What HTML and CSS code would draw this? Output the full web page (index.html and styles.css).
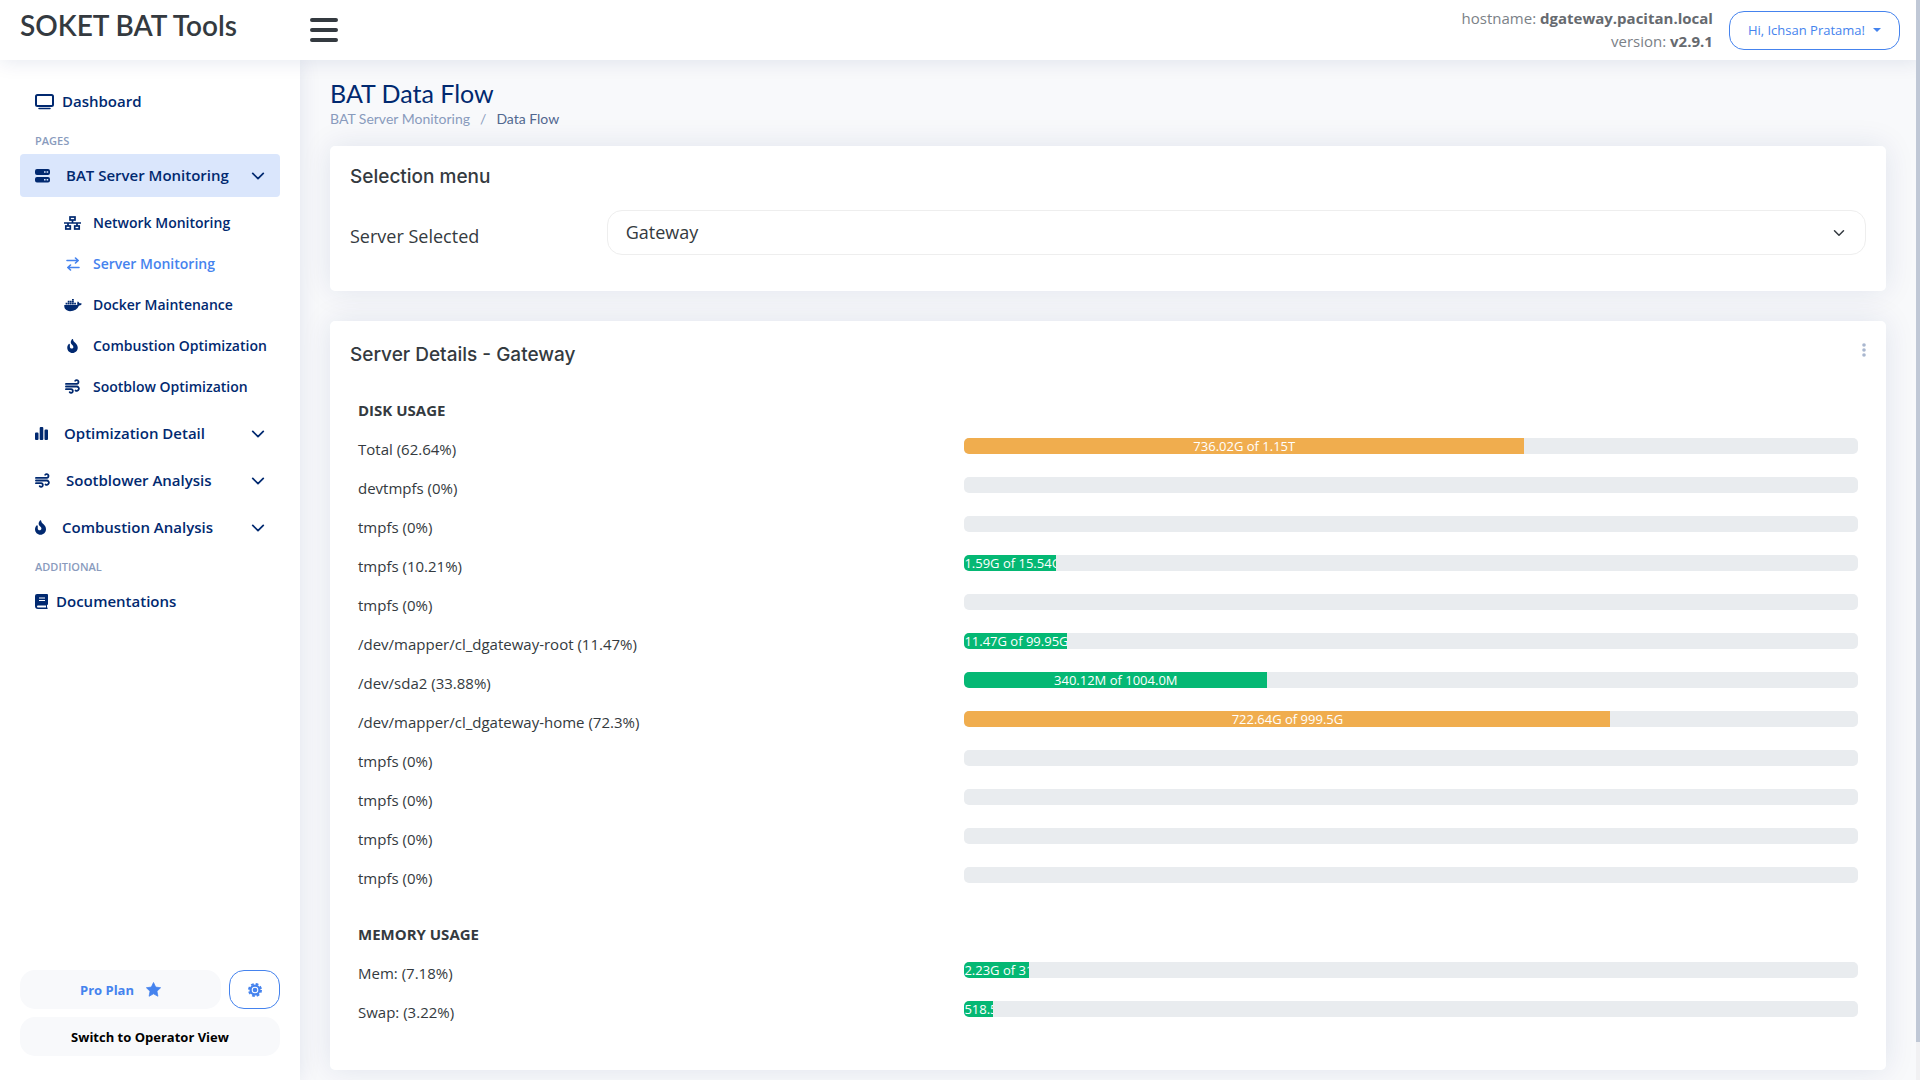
FILE: index.html
```html
<!DOCTYPE html>
<html lang="en">
<head>
<meta charset="utf-8">
<meta name="viewport" content="width=device-width, initial-scale=1">
<title>BAT Data Flow</title>
<link rel="stylesheet" href="styles.css">
</head>
<body>
<svg class="sprite" aria-hidden="true">
  <symbol id="i-down" viewBox="0 0 16 16"><path d="M2 5l6 6 6-6" fill="none" stroke="currentColor" stroke-width="2" stroke-linecap="round" stroke-linejoin="round"/></symbol>
  <symbol id="i-wind" viewBox="0 0 16 16"><g fill="none" stroke="currentColor" stroke-width="1.9" stroke-linecap="round"><path d="M1 5.2h11.5a2 2 0 1 0-1.6-3.3"/><path d="M1 8h11.6a2.3 2.3 0 1 1-1.4 4.2"/><path d="M1 10.900h5.500a1.900 1.900 0 1 1-1.500 3.100"/></g></symbol>
  <symbol id="i-fire" viewBox="0 0 384 512"><path fill="currentColor" d="M216 23.86c0-23.8-30.65-32.77-44.15-13.04C48 191.85 224 200 224 288c0 35.63-29.11 64.46-64.85 63.99-35.17-.45-63.15-29.77-63.15-64.94v-85.51c0-21.7-26.47-32.23-41.43-16.5C27.8 213.16 0 261.33 0 320c0 105.87 86.13 192 192 192s192-86.13 192-192c0-170.29-168-193-168-296.14z"/></symbol>
</svg>

<header class="topbar">
  <a class="brand" href="#">SOKET BAT Tools</a>
  <button class="menu-toggle" type="button" aria-label="Toggle sidebar">
    <svg width="28" height="24" viewBox="0 0 28 24"><path d="M2 2h24M2 12h24M2 22h24" stroke="currentColor" stroke-width="4" stroke-linecap="round"/></svg>
  </button>
  <div class="host">
    <div>hostname: <strong>dgateway.pacitan.local</strong></div>
    <div>version: <strong>v2.9.1</strong></div>
  </div>
  <button class="btn outline user" type="button">Hi, Ichsan Pratama! <span class="caret"></span></button>
</header>

<div class="shell">
  <aside class="sidebar">
    <nav>
      <a class="item top" href="#"><svg width="19" height="16" viewBox="0 0 19 16"><rect x="1" y="1" width="17" height="11" rx="1.500" fill="none" stroke="currentColor" stroke-width="2"/><path d="M4 14.500h11" stroke="currentColor" stroke-width="1.500" stroke-linecap="round"/></svg><span class="near">Dashboard</span></a>
      <h6>PAGES</h6>
      <a class="item active" href="#"><svg width="15" height="14" viewBox="0 0 15 14"><path fill="currentColor" fill-rule="evenodd" d="M2 0h11a2 2 0 0 1 2 2v2a2 2 0 0 1-2 2H2a2 2 0 0 1-2-2V2a2 2 0 0 1 2-2zM9 2.200v1.600h1.600V2.200zM11.600 2.200v1.600h1.600V2.200zM2 8h11a2 2 0 0 1 2 2v1.500a2 2 0 0 1-2 2H2a2 2 0 0 1-2-2V10a2 2 0 0 1 2-2zM9 10v1.600h1.600V10zM11.600 10v1.600h1.600V10z"/></svg><span>BAT Server Monitoring</span><svg class="chev" width="14" height="14"><use href="#i-down"/></svg></a>
      <ul>
        <li><a href="#"><svg width="17" height="14" viewBox="0 0 17 14"><g fill="none" stroke="currentColor" stroke-width="1.700"><rect x="6" y="1" width="5" height="3"/><rect x="1.800" y="10" width="4.500" height="3"/><rect x="10.700" y="10" width="4.500" height="3"/><path d="M0 7h17M8.500 4v3M4 7v3M13 7v3"/></g></svg>Network Monitoring</a></li>
        <li><a class="on" href="#"><svg width="14" height="14" viewBox="0 0 14 14"><path d="M1 3.500h11M9.500 1l2.700 2.500-2.700 2.500M13 10.500H2M4.500 8L1.800 10.500l2.700 2.500" fill="none" stroke="currentColor" stroke-width="1.600" stroke-linecap="round" stroke-linejoin="round"/></svg>Server Monitoring</a></li>
        <li><a href="#"><svg width="18" height="14" viewBox="0 0 640 512"><path fill="currentColor" d="M349.900 236.300h-66.100v-59.400h66.100v59.400zm0-204.300h-66.100v60.700h66.100V32zm78.200 144.800H362v59.400h66.100v-59.400zm-156.300-72.100h-66.100v60.100h66.100v-60.100zm78.100 0h-66.100v60.100h66.100v-60.100zm276.800 100c-14.400-9.700-47.600-13.200-73.100-8.400-3.300-24-16.700-44.900-41.100-63.700l-14-9.300-9.300 14c-18.400 27.800-23.400 73.600-3.700 103.800-8.700 4.700-25.800 11.100-48.400 10.700H2.400c-8.700 50.800 5.800 116.800 44 162.100 37.100 43.900 92.700 66.200 165.400 66.200 157.400 0 273.900-72.500 328.400-204.200 21.400.4 67.600.1 91.300-45.200 1.500-2.500 6.600-13.200 8.500-17.100l-13.300-8.900zm-511.100-27.900h-66v59.400h66.100v-59.400zm78.100 0h-66.100v59.400h66.100v-59.400zm78.100 0h-66.100v59.400h66.100v-59.400zm-78.100-72.100h-66.100v60.100h66.100v-60.100z"/></svg>Docker Maintenance</a></li>
        <li><a href="#"><svg width="11" height="14"><use href="#i-fire"/></svg>Combustion Optimization</a></li>
        <li><a href="#"><svg width="15" height="15"><use href="#i-wind"/></svg>Sootblow Optimization</a></li>
      </ul>
      <a class="item" href="#"><svg width="13" height="13" viewBox="0 0 13 13"><path fill="currentColor" d="M1 5.500h1.500a1 1 0 0 1 1 1V12a1 1 0 0 1-1 1H1a1 1 0 0 1-1-1V6.500a1 1 0 0 1 1-1zM5.700 0h1.600a1 1 0 0 1 1 1v11a1 1 0 0 1-1 1H5.700a1 1 0 0 1-1-1V1a1 1 0 0 1 1-1zM10.500 2.500H12a1 1 0 0 1 1 1V12a1 1 0 0 1-1 1h-1.500a1 1 0 0 1-1-1V3.500a1 1 0 0 1 1-1z"/></svg><span>Optimization Detail</span><svg class="chev" width="14" height="14"><use href="#i-down"/></svg></a>
      <a class="item" href="#"><svg width="15" height="15"><use href="#i-wind"/></svg><span>Sootblower Analysis</span><svg class="chev" width="14" height="14"><use href="#i-down"/></svg></a>
      <a class="item" href="#"><svg width="11" height="15"><use href="#i-fire"/></svg><span>Combustion Analysis</span><svg class="chev" width="14" height="14"><use href="#i-down"/></svg></a>
      <h6>ADDITIONAL</h6>
      <a class="item docs" href="#"><svg width="13" height="15" viewBox="0 0 13 15"><path fill="currentColor" fill-rule="evenodd" d="M2 0h10a1 1 0 0 1 1 1v9a1 1 0 0 1-1 1v2.500a.75.75 0 0 1 0 1.500H3a3 3 0 0 1-3-3V2a2 2 0 0 1 2-2zM4 3.500v1h6v-1zM4 6v1h6V6zM3 11.500a1 1 0 0 0 0 2h8v-2z"/></svg><span class="near">Documentations</span></a>
    </nav>
    <div class="actions">
      <button class="btn soft plan" type="button">Pro Plan <svg width="15" height="15" viewBox="0 0 16 16"><path fill="currentColor" d="M8 .5l2.300 4.900 5.300.7-3.900 3.700 1 5.400L8 12.600l-4.700 2.600 1-5.400L.4 6.100l5.300-.7z" stroke="currentColor" stroke-linejoin="round" stroke-width=".8"/></svg></button>
      <button class="btn outline" type="button" aria-label="Settings"><svg width="14" height="14" viewBox="0 0 14 14"><g fill="none" stroke="currentColor"><circle cx="7" cy="7" r="4.400" stroke-width="2.200"/><circle cx="7" cy="7" r="6" stroke-width="2" stroke-dasharray="2.700 2.012"/></g><circle cx="7" cy="7" r="2.300" fill="currentColor"/></svg></button>
      <button class="btn soft switch" type="button">Switch to Operator View</button>
    </div>
  </aside>

  <main>
    <h1>BAT Data Flow</h1>
    <nav class="crumbs" aria-label="Breadcrumb"><a href="#">BAT Server Monitoring</a><span class="sep">/</span><span>Data Flow</span></nav>

    <section class="card selection">
      <h2>Selection menu</h2>
      <div class="field">
        <label for="server">Server Selected</label>
        <div class="select"><select id="server"><option>Gateway</option></select><svg width="12" height="12"><use href="#i-down"/></svg></div>
      </div>
    </section>

    <section class="card details">
      <div class="card-head">
        <h2>Server Details - Gateway</h2>
        <button class="more" type="button" aria-label="More options"><svg width="4" height="14" viewBox="0 0 4 14"><g fill="currentColor"><circle cx="2" cy="2" r="1.800"/><circle cx="2" cy="7" r="1.800"/><circle cx="2" cy="12" r="1.800"/></g></svg></button>
      </div>
      <table>
        <colgroup><col class="name"><col></colgroup>
        <tbody>
          <tr class="group"><th colspan="2" scope="colgroup">DISK USAGE</th></tr>
          <tr><th scope="row">Total (62.64%)</th><td><div class="bar"><div class="fill warn" style="width:62.64%">736.02G of 1.15T</div></div></td></tr>
          <tr><th scope="row">devtmpfs (0%)</th><td><div class="bar"></div></td></tr>
          <tr><th scope="row">tmpfs (0%)</th><td><div class="bar"></div></td></tr>
          <tr><th scope="row">tmpfs (10.21%)</th><td><div class="bar"><div class="fill" style="width:10.21%">1.59G of 15.54G</div></div></td></tr>
          <tr><th scope="row">tmpfs (0%)</th><td><div class="bar"></div></td></tr>
          <tr><th scope="row">/dev/mapper/cl_dgateway-root (11.47%)</th><td><div class="bar"><div class="fill" style="width:11.47%">11.47G of 99.95G</div></div></td></tr>
          <tr><th scope="row">/dev/sda2 (33.88%)</th><td><div class="bar"><div class="fill" style="width:33.88%">340.12M of 1004.0M</div></div></td></tr>
          <tr><th scope="row">/dev/mapper/cl_dgateway-home (72.3%)</th><td><div class="bar"><div class="fill warn" style="width:72.3%">722.64G of 999.5G</div></div></td></tr>
          <tr><th scope="row">tmpfs (0%)</th><td><div class="bar"></div></td></tr>
          <tr><th scope="row">tmpfs (0%)</th><td><div class="bar"></div></td></tr>
          <tr><th scope="row">tmpfs (0%)</th><td><div class="bar"></div></td></tr>
          <tr><th scope="row">tmpfs (0%)</th><td><div class="bar"></div></td></tr>
        </tbody>
        <tbody class="memory">
          <tr class="group"><th colspan="2" scope="colgroup">MEMORY USAGE</th></tr>
          <tr><th scope="row">Mem: (7.18%)</th><td><div class="bar"><div class="fill" style="width:7.18%">2.23G of 31</div></div></td></tr>
          <tr><th scope="row">Swap: (3.22%)</th><td><div class="bar"><div class="fill" style="width:3.22%">518.5</div></div></td></tr>
        </tbody>
      </table>
    </section>
  </main>
</div>
<div class="scroll" aria-hidden="true"></div>
</body>
</html>
```

FILE: styles.css
```css
* { box-sizing: border-box; }
body {
  margin: 0;
  background: #f8f9fb;
  color: #343a40;
  font: 15px/23px "Open Sans", sans-serif;
}
a { color: inherit; text-decoration: none; }
button { font: inherit; cursor: pointer; }
svg { flex: none; }
.sprite { display: none; }

.topbar {
  position: sticky;
  top: 0;
  z-index: 3;
  display: flex;
  align-items: center;
  height: 60px;
  padding: 0 20px;
  background: #fff;
  box-shadow: 0 2px 20px rgba(1, 41, 112, .1);
}
.brand {
  width: 290px;
  padding-bottom: 10px;
  font: 600 28px/32px Lato, sans-serif;
}
.menu-toggle {
  display: flex;
  padding: 0;
  border: 0;
  background: none;
  color: #343a40;
}
.host {
  margin-left: auto;
  margin-right: 16px;
  text-align: right;
  color: #7b8187;
}
.host strong { color: #666a6f; }
.btn {
  display: flex;
  align-items: center;
  justify-content: center;
  height: 39px;
  padding: 0 18px;
  border: 1px solid transparent;
  border-radius: 15px;
  font-size: 13px;
  line-height: 20px;
}
.outline { background: #fff; border-color: #4583ee; color: #4583ee; }
.soft { background: #f8f9fb; font-weight: 700; color: #000; }
.caret {
  margin-left: 8px;
  border: 4px solid transparent;
  border-top-color: currentColor;
  border-bottom: 0;
}

.shell {
  display: grid;
  grid-template-columns: 300px minmax(0, 1fr);
}
.sidebar {
  position: sticky;
  top: 60px;
  display: flex;
  flex-direction: column;
  justify-content: space-between;
  height: calc(100vh - 60px);
  padding: 20px 20px 24px;
  background: #fff;
  color: #012970;
  box-shadow: 0 0 20px rgba(1, 41, 112, .1);
  font-weight: 600;
}
.item {
  display: flex;
  align-items: center;
  gap: 16px;
  height: 43px;
  margin-bottom: 4px;
  padding: 0 15px;
  border-radius: 4px;
}
.item .near { margin-left: -8px; }
.chev { margin-left: auto; }
.active { background: #dae6fc; }
.sidebar h6 {
  margin: 10px 15px 5px;
  color: #899bbd;
  font-size: 11px;
  line-height: 16px;
  font-weight: 600;
}
.sidebar ul {
  margin: 5px 0;
  padding: 0;
  list-style: none;
}
.sidebar li a {
  display: grid;
  grid-template-columns: 25px 1fr;
  justify-items: start;
  align-items: center;
  gap: 8px;
  height: 41px;
  padding-left: 40px;
  font-size: 14px;
}
.sidebar li svg { justify-self: center; }
.on { color: #4583ee; }
.actions {
  display: grid;
  grid-template-columns: 1fr 51px;
  gap: 8px;
}
.actions .btn { padding: 0; }
.plan { gap: 12px; color: #4583ee; }
.switch { grid-column: 1 / -1; }

main { padding: 18px 34px 11px 30px; }
h1 {
  margin: 0 0 1px;
  color: #012970;
  font: 400 25px/30px Lato, sans-serif;
}
.crumbs {
  display: flex;
  gap: 10px;
  margin-bottom: 17px;
  color: #51678f;
  font: 14px/20px Lato, sans-serif;
}
.crumbs a, .sep { color: #899bbd; }
.card {
  margin-bottom: 30px;
  padding: 0 20px;
  border-radius: 5px;
  background: #fff;
  box-shadow: 0 0 30px rgba(1, 41, 112, .1);
}
.card h2 {
  margin: 0;
  font: 500 19px/22px Inter, sans-serif;
}
.selection { padding: 20px 20px 36px; }
.field {
  display: grid;
  grid-template-columns: 1fr 5fr;
  margin-top: 22px;
  font-size: 18px;
}
.field label { padding-top: 15px; }
.select {
  display: grid;
  align-items: center;
  margin-left: 4px;
}
.select > * { grid-area: 1 / 1; }
.select svg { justify-self: end; margin-right: 21px; pointer-events: none; }
.select select {
  appearance: none;
  width: 100%;
  height: 45px;
  padding: 0 18px;
  border: 1px solid #eee;
  border-radius: 15px;
  background: #fff;
  color: inherit;
  font: inherit;
}
.details { margin-bottom: 0; padding: 22px 20px 38px; }
.card-head {
  display: flex;
  justify-content: space-between;
  margin-bottom: 25px;
}
.card-head h2 { padding-top: 1px; }
.more {
  display: flex;
  height: 14px;
  padding: 0;
  border: 0;
  background: none;
  color: #aab7cf;
}
table {
  width: 100%;
  border-collapse: collapse;
  table-layout: fixed;
}
.name { width: 40%; }
tr { height: 39px; }
th, td { padding: 8px; vertical-align: top; }
th { text-align: left; font-weight: 400; }
.group th { font-weight: 700; }
.memory .group th { padding-top: 25px; }
.bar {
  display: flex;
  height: 16px;
  overflow: hidden;
  border-radius: 5px;
  background: #e9ecef;
}
.fill {
  overflow: hidden;
  background: #05b874;
  color: #fff;
  font-size: 13px;
  line-height: 16px;
  text-align: center;
  white-space: nowrap;
}
.warn { background: #f0ad4e; }
.scroll {
  position: fixed;
  z-index: 4;
  top: 0;
  right: 0;
  width: 4px;
  height: 100vh;
  background: linear-gradient(#c0c8d6 0 96.500%, #f1f1f3 96.500%);
}
```
